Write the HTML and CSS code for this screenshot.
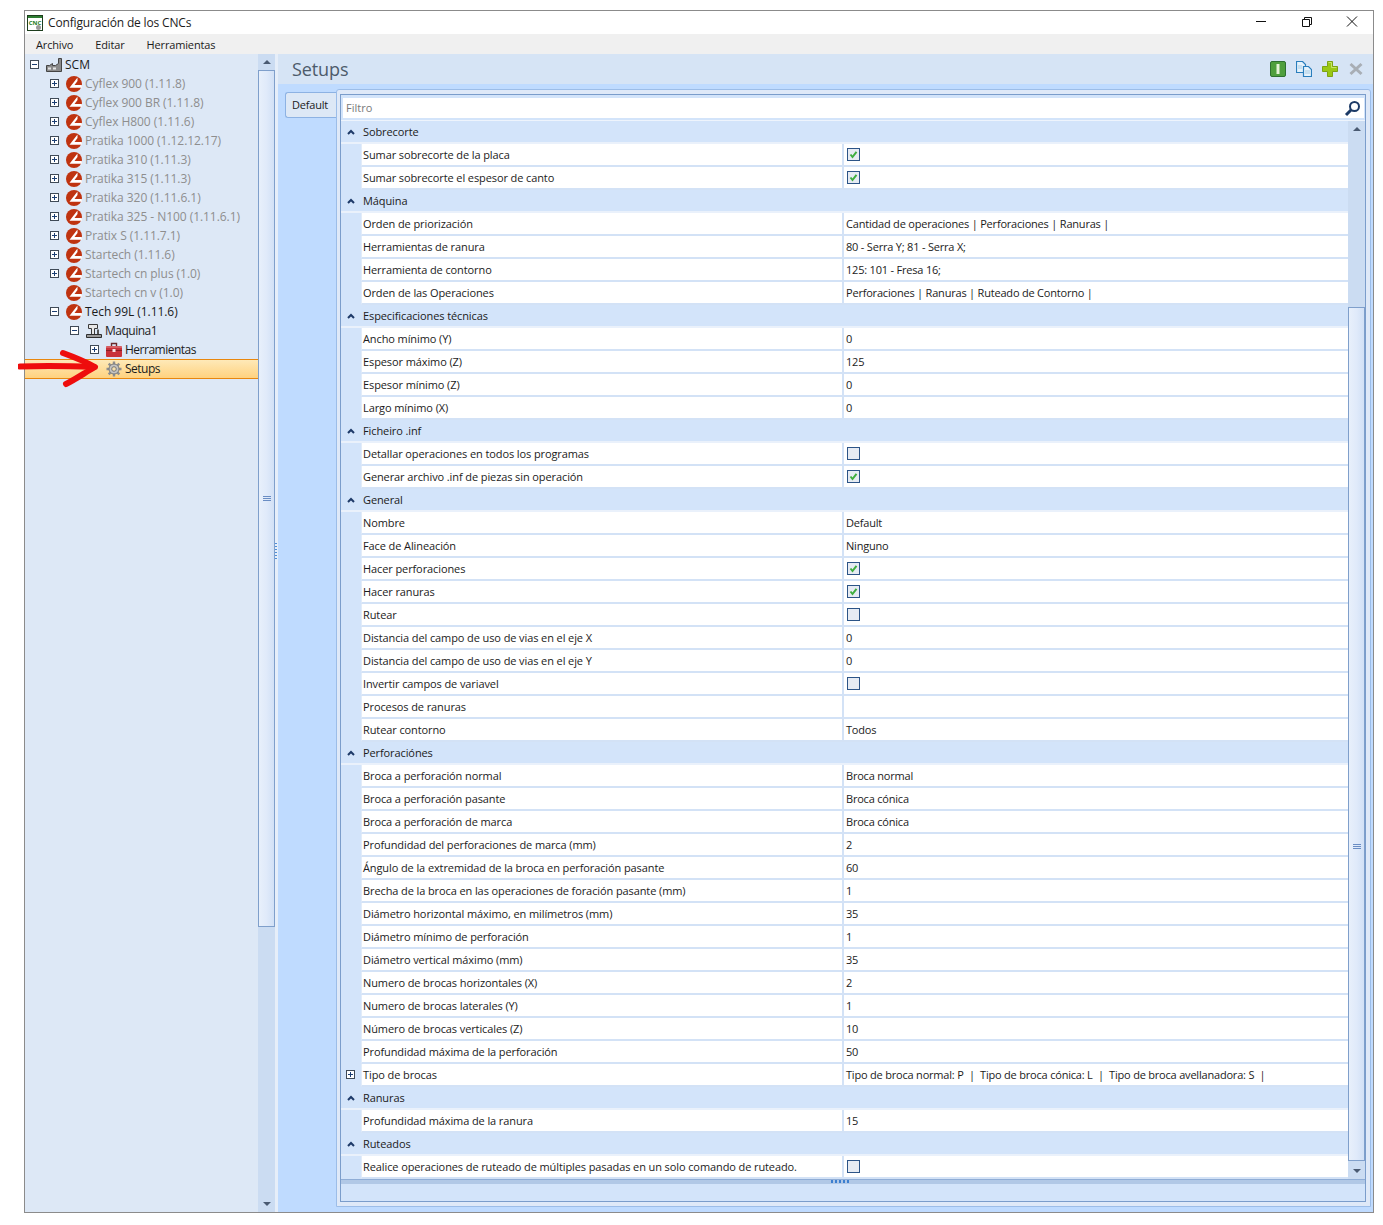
FILE: index.html
```html
<!DOCTYPE html>
<html lang="es">
<head>
  <meta charset="UTF-8">
  <title>Configuración de los CNCs</title>
  <link rel="stylesheet" href="styles.css">
</head>
<body>

  <svg class="defs" width="0" height="0">
    <symbol id="logo" viewBox="0 0 16 16">
      <circle cx="8" cy="8" r="8" fill="#bf3310"/>
      <path d="M11.500 1.500 L3.500 11.800 L16 11.800 L15.800 9 L8.500 9 L11.500 5 Z" fill="#fff"/>
    </symbol>
    <symbol id="plus" viewBox="0 0 9 9">
      <rect x=".5" y=".5" width="8" height="8" fill="#fff" stroke="#3f4a57"/>
      <path d="M2 4.5h5M4.5 2v5" stroke="#1c3f73" fill="none"/>
    </symbol>
    <symbol id="minus" viewBox="0 0 9 9">
      <rect x=".5" y=".5" width="8" height="8" fill="#fff" stroke="#3f4a57"/>
      <path d="M2 4.5h5" stroke="#1c3f73" fill="none"/>
    </symbol>
    <symbol id="check" viewBox="0 0 13 13">
      <rect x=".5" y=".5" width="12" height="12" fill="#e6ebf3" stroke="#2c5487"/>
      <path d="M3.500 6.500 L5.500 9 L9.500 3.800" stroke="#3fae3f" stroke-width="2" fill="none"/>
    </symbol>
    <symbol id="uncheck" viewBox="0 0 13 13">
      <rect x=".5" y=".5" width="12" height="12" fill="#e6ebf3" stroke="#2c5487"/>
    </symbol>
    <symbol id="chev" viewBox="0 0 8 6">
      <path d="M1 5 L4 2 L7 5" stroke="#1e3a68" stroke-width="2" fill="none"/>
    </symbol>
  </svg>

  <div class="window">
    <div class="titlebar">
      <svg class="app-icon" width="16" height="16" viewBox="0 0 16 16">
        <rect x=".5" y=".5" width="15" height="15" fill="#fff" stroke="#1d3d1d"/>
        <rect x="1" y="1" width="14" height="2" fill="#2e7d32"/>
        <text x="8" y="10" class="app-icon-text">CNC</text>
        <circle cx="11.500" cy="12.500" r="2.500" fill="#9a9a9a"/>
      </svg>
      <span class="title-text">Configuración de los CNCs</span>
      <div class="win-buttons">
        <svg width="46" height="23" viewBox="0 0 46 23"><path d="M21 10.500h10" stroke="#111"/></svg>
        <svg width="46" height="23" viewBox="0 0 46 23"><path d="M21.500 8.500h7v7h-7zM23.500 8.500v-2h7v7h-2" stroke="#111" fill="none"/></svg>
        <svg width="46" height="23" viewBox="0 0 46 23"><path d="M20 5.500l10 10M30 5.500l-10 10" stroke="#111" fill="none"/></svg>
      </div>
    </div>

    <div class="menubar">
      <span>Archivo</span>
      <span>Editar</span>
      <span>Herramientas</span>
    </div>

    <div class="main">
      <div class="tree-panel">
        <div class="tree">
          <div class="node">
            <svg class="exp"><use href="#minus"/></svg>
            <svg class="node-icon scm-icon" viewBox="0 0 18 16"><path d="M1.500 14.500V8.500h3l3-2v2h3l3-2V1.500h3v13z" fill="#8a8a8a" stroke="#444"/><path d="M3 10.500h3v2H3zM8 10.500h3v2H8z" fill="#e4e4e4"/></svg>
            <span>SCM</span>
          </div>
          <div class="node lv1 off"><svg class="exp"><use href="#plus"/></svg><svg class="node-icon"><use href="#logo"/></svg><span>Cyflex 900 (1.11.8)</span></div>
          <div class="node lv1 off"><svg class="exp"><use href="#plus"/></svg><svg class="node-icon"><use href="#logo"/></svg><span>Cyflex 900 BR (1.11.8)</span></div>
          <div class="node lv1 off"><svg class="exp"><use href="#plus"/></svg><svg class="node-icon"><use href="#logo"/></svg><span>Cyflex H800 (1.11.6)</span></div>
          <div class="node lv1 off"><svg class="exp"><use href="#plus"/></svg><svg class="node-icon"><use href="#logo"/></svg><span>Pratika 1000 (1.12.12.17)</span></div>
          <div class="node lv1 off"><svg class="exp"><use href="#plus"/></svg><svg class="node-icon"><use href="#logo"/></svg><span>Pratika 310 (1.11.3)</span></div>
          <div class="node lv1 off"><svg class="exp"><use href="#plus"/></svg><svg class="node-icon"><use href="#logo"/></svg><span>Pratika 315 (1.11.3)</span></div>
          <div class="node lv1 off"><svg class="exp"><use href="#plus"/></svg><svg class="node-icon"><use href="#logo"/></svg><span>Pratika 320 (1.11.6.1)</span></div>
          <div class="node lv1 off"><svg class="exp"><use href="#plus"/></svg><svg class="node-icon"><use href="#logo"/></svg><span>Pratika 325 - N100 (1.11.6.1)</span></div>
          <div class="node lv1 off"><svg class="exp"><use href="#plus"/></svg><svg class="node-icon"><use href="#logo"/></svg><span>Pratix S (1.11.7.1)</span></div>
          <div class="node lv1 off"><svg class="exp"><use href="#plus"/></svg><svg class="node-icon"><use href="#logo"/></svg><span>Startech (1.11.6)</span></div>
          <div class="node lv1 off"><svg class="exp"><use href="#plus"/></svg><svg class="node-icon"><use href="#logo"/></svg><span>Startech cn plus (1.0)</span></div>
          <div class="node lv1 off"><span class="exp"></span><svg class="node-icon"><use href="#logo"/></svg><span>Startech cn v (1.0)</span></div>
          <div class="node lv1"><svg class="exp"><use href="#minus"/></svg><svg class="node-icon"><use href="#logo"/></svg><span>Tech 99L (1.11.6)</span></div>
          <div class="node lv2">
            <svg class="exp"><use href="#minus"/></svg>
            <svg class="node-icon" viewBox="0 0 16 16"><path d="M2.500 1.500h9v4h-3v6h-3v-6h-3z" fill="#e8e8e8" stroke="#3a3a3a"/><path d="M11 6.500h2v5h-2z" fill="#555"/><path d="M.5 11.500h15v3H.5z" fill="#9a9a9a" stroke="#2f2f2f"/></svg>
            <span>Maquina1</span>
          </div>
          <div class="node lv3">
            <svg class="exp"><use href="#plus"/></svg>
            <svg class="node-icon" viewBox="0 0 16 16"><path d="M5.500 4.500V1.500h5v3" stroke="#6b2a2a" stroke-width="1.400" fill="none"/><rect y="4" width="16" height="11" rx="1" fill="#c8323a"/><path d="M0 8.500h16" stroke="#8c1d24"/><path d="M0 5h16" stroke="#e58a8a"/><rect x="6.500" y="7" width="3" height="3" fill="#f6e4e4"/></svg>
            <span>Herramientas</span>
          </div>
          <div class="node lv3 selected">
            <span class="exp"></span>
            <svg class="node-icon" viewBox="0 0 16 16"><path d="M8 .5v15M.5 8h15M2.700 2.700l10.600 10.600M13.300 2.700L2.700 13.300" stroke="#8f8f8f" stroke-width="2.400"/><circle cx="8" cy="8" r="5" fill="#c4c4c4" stroke="#7b7b7b"/><circle cx="8" cy="8" r="2.300" fill="#f4dfae" stroke="#777"/></svg>
            <span>Setups</span>
          </div>
        </div>
        <div class="scrollbar">
          <div class="sb-btn"><span class="tri-up"></span></div>
          <div class="sb-track">
            <div class="sb-thumb tree-thumb"><span class="grip"></span></div>
          </div>
          <div class="sb-btn"><span class="tri-down"></span></div>
        </div>
      </div>

      <div class="splitter"><span class="split-dots"></span></div>

      <div class="right">
        <div class="right-head">
          <span class="right-title">Setups</span>
          <div class="tools">
            <svg width="16" height="16" viewBox="0 0 16 16"><rect x=".5" y=".5" width="15" height="15" rx="1.500" fill="#4f9f3d" stroke="#2e7030"/><rect x="6.500" y="3" width="3" height="10" fill="#e6f3d8"/></svg>
            <svg width="16" height="16" viewBox="0 0 16 16"><path d="M.5 .5h6l3 3v8H.5z" fill="#e5f2fb" stroke="#2a7ebd" stroke-width="1.200"/><path d="M7.500 5.500h5l3 3v7h-8z" fill="#e5f2fb" stroke="#2a7ebd" stroke-width="1.200"/><path d="M2 5h4M2 7h4M9 10h5M9 12h5" stroke="#a9cbe3"/></svg>
            <svg width="16" height="16" viewBox="0 0 16 16"><path d="M5.500 .5h5v5h5v5h-5v5h-5v-5h-5v-5h5z" fill="#9ac814" stroke="#7da312"/><path d="M6.500 1.500h3v5h5" stroke="#c8e66a" fill="none"/></svg>
            <svg width="16" height="16" viewBox="0 0 16 16"><path d="M2.500 3l11 10M13.500 3l-11 10" stroke="#a8aeb5" stroke-width="3"/></svg>
          </div>
        </div>

        <div class="tab-area">
          <div class="tab">Default</div>
          <div class="page">
            <div class="page-inner">
              <div class="filter">
                <span class="filter-text">Filtro</span>
                <svg width="17" height="17" viewBox="0 0 17 17"><circle cx="10.500" cy="6.500" r="4.500" fill="#fff" stroke="#1c3a66" stroke-width="2"/><path d="M7 10l-5 5" stroke="#1c3a66" stroke-width="3"/></svg>
              </div>

              <div class="grid-wrap">
                <div class="grid">
                  <div class="group"><svg class="chev"><use href="#chev"/></svg><span>Sobrecorte</span></div>
                  <div class="row"><span class="label">Sumar sobrecorte de la placa</span><span class="val"><svg class="box"><use href="#check"/></svg></span></div>
                  <div class="row"><span class="label">Sumar sobrecorte el espesor de canto</span><span class="val"><svg class="box"><use href="#check"/></svg></span></div>

                  <div class="group"><svg class="chev"><use href="#chev"/></svg><span>Máquina</span></div>
                  <div class="row"><span class="label">Orden de priorización</span><span class="val">Cantidad de operaciones | Perforaciones | Ranuras |</span></div>
                  <div class="row"><span class="label">Herramientas de ranura</span><span class="val">80 - Serra Y; 81 - Serra X;</span></div>
                  <div class="row"><span class="label">Herramienta de contorno</span><span class="val">125: 101 - Fresa 16;</span></div>
                  <div class="row"><span class="label">Orden de las Operaciones</span><span class="val">Perforaciones | Ranuras | Ruteado de Contorno |</span></div>

                  <div class="group"><svg class="chev"><use href="#chev"/></svg><span>Especificaciones técnicas</span></div>
                  <div class="row"><span class="label">Ancho mínimo (Y)</span><span class="val">0</span></div>
                  <div class="row"><span class="label">Espesor máximo (Z)</span><span class="val">125</span></div>
                  <div class="row"><span class="label">Espesor mínimo (Z)</span><span class="val">0</span></div>
                  <div class="row"><span class="label">Largo mínimo (X)</span><span class="val">0</span></div>

                  <div class="group"><svg class="chev"><use href="#chev"/></svg><span>Ficheiro .inf</span></div>
                  <div class="row"><span class="label">Detallar operaciones en todos los programas</span><span class="val"><svg class="box"><use href="#uncheck"/></svg></span></div>
                  <div class="row"><span class="label">Generar archivo .inf de piezas sin operación</span><span class="val"><svg class="box"><use href="#check"/></svg></span></div>

                  <div class="group"><svg class="chev"><use href="#chev"/></svg><span>General</span></div>
                  <div class="row"><span class="label">Nombre</span><span class="val">Default</span></div>
                  <div class="row"><span class="label">Face de Alineación</span><span class="val">Ninguno</span></div>
                  <div class="row"><span class="label">Hacer perforaciones</span><span class="val"><svg class="box"><use href="#check"/></svg></span></div>
                  <div class="row"><span class="label">Hacer ranuras</span><span class="val"><svg class="box"><use href="#check"/></svg></span></div>
                  <div class="row"><span class="label">Rutear</span><span class="val"><svg class="box"><use href="#uncheck"/></svg></span></div>
                  <div class="row"><span class="label">Distancia del campo de uso de vias en el eje X</span><span class="val">0</span></div>
                  <div class="row"><span class="label">Distancia del campo de uso de vias en el eje Y</span><span class="val">0</span></div>
                  <div class="row"><span class="label">Invertir campos de variavel</span><span class="val"><svg class="box"><use href="#uncheck"/></svg></span></div>
                  <div class="row"><span class="label">Procesos de ranuras</span><span class="val"></span></div>
                  <div class="row"><span class="label">Rutear contorno</span><span class="val">Todos</span></div>

                  <div class="group"><svg class="chev"><use href="#chev"/></svg><span>Perforaciónes</span></div>
                  <div class="row"><span class="label">Broca a perforación normal</span><span class="val">Broca normal</span></div>
                  <div class="row"><span class="label">Broca a perforación pasante</span><span class="val">Broca cónica</span></div>
                  <div class="row"><span class="label">Broca a perforación de marca</span><span class="val">Broca cónica</span></div>
                  <div class="row"><span class="label">Profundidad del perforaciones de marca (mm)</span><span class="val">2</span></div>
                  <div class="row"><span class="label">Ángulo de la extremidad de la broca en perforación pasante</span><span class="val">60</span></div>
                  <div class="row"><span class="label">Brecha de la broca en las operaciones de foración pasante (mm)</span><span class="val">1</span></div>
                  <div class="row"><span class="label">Diámetro horizontal máximo, en milímetros (mm)</span><span class="val">35</span></div>
                  <div class="row"><span class="label">Diámetro mínimo de perforación</span><span class="val">1</span></div>
                  <div class="row"><span class="label">Diámetro vertical máximo (mm)</span><span class="val">35</span></div>
                  <div class="row"><span class="label">Numero de brocas horizontales (X)</span><span class="val">2</span></div>
                  <div class="row"><span class="label">Numero de brocas laterales (Y)</span><span class="val">1</span></div>
                  <div class="row"><span class="label">Número de brocas verticales (Z)</span><span class="val">10</span></div>
                  <div class="row"><span class="label">Profundidad máxima de la perforación</span><span class="val">50</span></div>
                  <div class="row"><svg class="row-exp"><use href="#plus"/></svg><span class="label">Tipo de brocas</span><span class="val">Tipo de broca normal: P &nbsp;|&nbsp; Tipo de broca cónica: L &nbsp;|&nbsp; Tipo de broca avellanadora: S &nbsp;|</span></div>

                  <div class="group"><svg class="chev"><use href="#chev"/></svg><span>Ranuras</span></div>
                  <div class="row"><span class="label">Profundidad máxima de la ranura</span><span class="val">15</span></div>

                  <div class="group"><svg class="chev"><use href="#chev"/></svg><span>Ruteados</span></div>
                  <div class="row"><span class="label">Realice operaciones de ruteado de múltiples pasadas en un solo comando de ruteado.</span><span class="val"><svg class="box"><use href="#uncheck"/></svg></span></div>
                </div>
                <div class="scrollbar grid-bar">
                  <div class="sb-btn"><span class="tri-up"></span></div>
                  <div class="sb-track">
                    <div class="sb-thumb grid-thumb"><span class="grip"></span></div>
                  </div>
                  <div class="sb-btn"><span class="tri-down"></span></div>
                </div>
              </div>

              <div class="help-split"><span class="help-dots"></span></div>
              <div class="help"></div>
            </div>
          </div>
        </div>
      </div>
    </div>

    <svg class="red-arrow" width="88" height="40" viewBox="0 0 88 40">
      <path d="M2 17.500 C28 16.500 52 17 76 18" stroke="#ee0d0d" stroke-width="6" fill="none" stroke-linecap="round"/>
      <path d="M45 4 C56 8 68 13 77 18 C68 23 58 30 48 35" stroke="#ee0d0d" stroke-width="6" fill="none" stroke-linecap="round" stroke-linejoin="round"/>
    </svg>
  </div>

</body>
</html>
```

FILE: styles.css
```css
body {
  margin: 0;
  background: #fff;
  font-family: "Open Sans", "Noto Sans", sans-serif;
  font-size: 11px;
  color: #1b1b1b;
  overflow: hidden;
}
.defs {
  position: absolute;
}
.window {
  position: relative;
  width: 1348px;
  height: 1201px;
  margin: 10px 0 0 24px;
  border: 1px solid #8b8b8b;
  display: flex;
  flex-direction: column;
}

/* title bar */
.titlebar {
  height: 23px;
  display: flex;
  align-items: center;
  padding-left: 2px;
  background: #fff;
}
.app-icon {
  flex: none;
}
.app-icon-text {
  font-size: 6px;
  font-weight: bold;
  fill: #1a7a1a;
  text-anchor: middle;
}
.title-text {
  margin-left: 5px;
  font-size: 12px;
  letter-spacing: -0.16px;
}
.win-buttons {
  margin-left: auto;
  display: flex;
}
.menubar {
  height: 20px;
  display: flex;
  align-items: center;
  gap: 22px;
  padding-left: 11px;
  background: #f0f0f0;
  font-size: 11px;
  letter-spacing: -0.15px;
}
.main {
  flex: 1;
  display: flex;
  min-height: 0;
}

/* tree */
.tree-panel {
  width: 250px;
  display: flex;
  background: #dde8f6;
}
.tree {
  width: 233px;
  padding-top: 1px;
}
.node {
  height: 19px;
  display: flex;
  align-items: center;
  font-size: 12px;
  color: #1b1b1b;
}
.lv1 { padding-left: 20px; letter-spacing: -0.05px; }
.lv2 { padding-left: 40px; letter-spacing: -0.5px; }
.lv3 { padding-left: 60px; letter-spacing: -0.5px; }
.off { color: #8e8e8e; }
.exp {
  flex: none;
  width: 9px;
  height: 9px;
  margin: 0 7px 0 5px;
}
.node-icon {
  flex: none;
  width: 16px;
  height: 16px;
  margin-right: 3px;
}
.scm-icon {
  width: 18px;
  margin-left: -1px;
  margin-right: 2px;
}
.selected {
  height: 20px;
  box-sizing: border-box;
  padding-bottom: 1px;
  border-top: 1px solid #e8870e;
  border-bottom: 1px solid #e8870e;
  background: linear-gradient(#fee9b8, #ffd27f);
}

/* scrollbars */
.scrollbar {
  width: 17px;
  display: flex;
  flex-direction: column;
  background: #cbdcf2;
}
.sb-btn {
  height: 16px;
  flex: none;
  display: flex;
  align-items: center;
  justify-content: center;
}
.sb-track {
  flex: 1;
  min-height: 0;
}
.sb-thumb {
  box-sizing: border-box;
  display: flex;
  align-items: center;
  justify-content: center;
  border: 1px solid #7f9fcb;
  background: linear-gradient(90deg, #e8f0fb, #e0eafa 50%, #d2e1f6);
}
.tree-thumb {
  height: 857px;
}
.grid-thumb {
  height: 854px;
  margin-top: 170px;
  align-items: flex-start;
  padding-top: 536px;
}
.grip {
  width: 8px;
  height: 5px;
  background: repeating-linear-gradient(#6a8dc4 0 1px, transparent 1px 2px);
}
.tri-up, .tri-down {
  width: 0;
  height: 0;
  border-left: 4px solid transparent;
  border-right: 4px solid transparent;
}
.tri-up {
  border-bottom: 4px solid #4a5a72;
}
.tri-down {
  border-top: 4px solid #4a5a72;
}

/* splitter between panels */
.splitter {
  width: 3px;
  flex: none;
  background: #e6eef9;
}
.split-dots {
  display: block;
  width: 2px;
  height: 18px;
  margin-top: 489px;
  background: repeating-linear-gradient(#4f8fd8 0 1px, transparent 1px 3px);
}

/* right side */
.right {
  flex: 1;
  min-width: 0;
  display: flex;
  flex-direction: column;
  background: #bfdbff;
}
.right-head {
  height: 30px;
  flex: none;
  display: flex;
  align-items: center;
  padding: 0 9px 0 14px;
  background: #d6e4f5;
}
.right-title {
  font-size: 18px;
  color: #4d5b6b;
  letter-spacing: -0.1px;
}
.tools {
  margin-left: auto;
  display: flex;
  gap: 10px;
}
.tab-area {
  flex: 1;
  min-height: 0;
  display: flex;
  padding: 5px 2px 5px 7px;
}
.tab {
  width: 51px;
  height: 26px;
  margin-top: 3px;
  padding-right: 2px;
  box-sizing: border-box;
  border: 1px solid #8db2e3;
  border-right: none;
  border-radius: 3px 0 0 3px;
  background: #dde8f6;
  font-size: 11px;
  line-height: 23px;
  letter-spacing: -0.2px;
  text-align: center;
}
.page {
  flex: 1;
  min-width: 0;
  box-sizing: border-box;
  border: 1px solid #9cbde8;
  border-radius: 3px 3px 0 0;
  background: #dfe9f8;
  padding: 4px 4px 4px 3px;
  display: flex;
}
.page-inner {
  flex: 1;
  min-width: 0;
  box-sizing: border-box;
  border: 1px solid #7b9dcb;
  display: flex;
  flex-direction: column;
  background: #d3e4fa;
}
.filter {
  height: 20px;
  flex: none;
  margin: 3px 1px 2px 2px;
  display: flex;
  align-items: center;
  justify-content: space-between;
  padding: 0 3px;
  background: #fff;
}
.filter-text {
  margin-bottom: 2px;
  color: #7a7a7a;
  font-size: 11px;
}
.grid-wrap {
  display: flex;
  border-top: 1px solid #eef4fc;
}
.grid {
  flex: 1;
  min-width: 0;
}
.grid-bar {
  width: 17px;
  background: #cbdcf2;
}
.group {
  height: 23px;
  display: flex;
  align-items: center;
  box-sizing: border-box;
  border-bottom: 2px solid #eaf1fb;
  background: #d3e4fa;
  font-size: 11px;
  letter-spacing: -0.1px;
}
.chev {
  flex: none;
  width: 8px;
  height: 6px;
  margin: 0 8px 0 6px;
}
.row {
  height: 23px;
  display: flex;
  align-items: center;
  box-sizing: border-box;
  position: relative;
  margin-left: 20px;
  border-bottom: 2px solid #d3e2f6;
  border-left: 1px solid #e2ecf9;
  background: #fff;
  font-size: 11px;
}
.row-exp {
  position: absolute;
  left: -16px;
  top: 6px;
  width: 9px;
  height: 9px;
}
.label {
  width: 479px;
  height: 100%;
  flex: none;
  display: flex;
  align-items: center;
  padding-left: 1px;
  border-right: 2px solid #d3e2f6;
  letter-spacing: -0.1px;
  white-space: nowrap;
}
.val {
  flex: 1;
  display: flex;
  align-items: center;
  padding-left: 2px;
  white-space: nowrap;
  letter-spacing: -0.2px;
}
.box {
  width: 13px;
  height: 13px;
  margin-left: 1px;
}
.help-split {
  height: 5px;
  flex: none;
  display: flex;
  justify-content: center;
  padding-right: 24px;
  background: #b1c8e6;
  border-top: 1px solid #8fadd6;
  box-sizing: border-box;
}
.help-dots {
  width: 20px;
  height: 3px;
  background: repeating-linear-gradient(90deg, #3c7fd0 0 2px, transparent 2px 4px);
}
.help {
  flex: 1;
  background: #d3e4fa;
}

/* annotation drawn over the screenshot */
.red-arrow {
  position: absolute;
  left: -7px;
  top: 338px;
  pointer-events: none;
}
```
